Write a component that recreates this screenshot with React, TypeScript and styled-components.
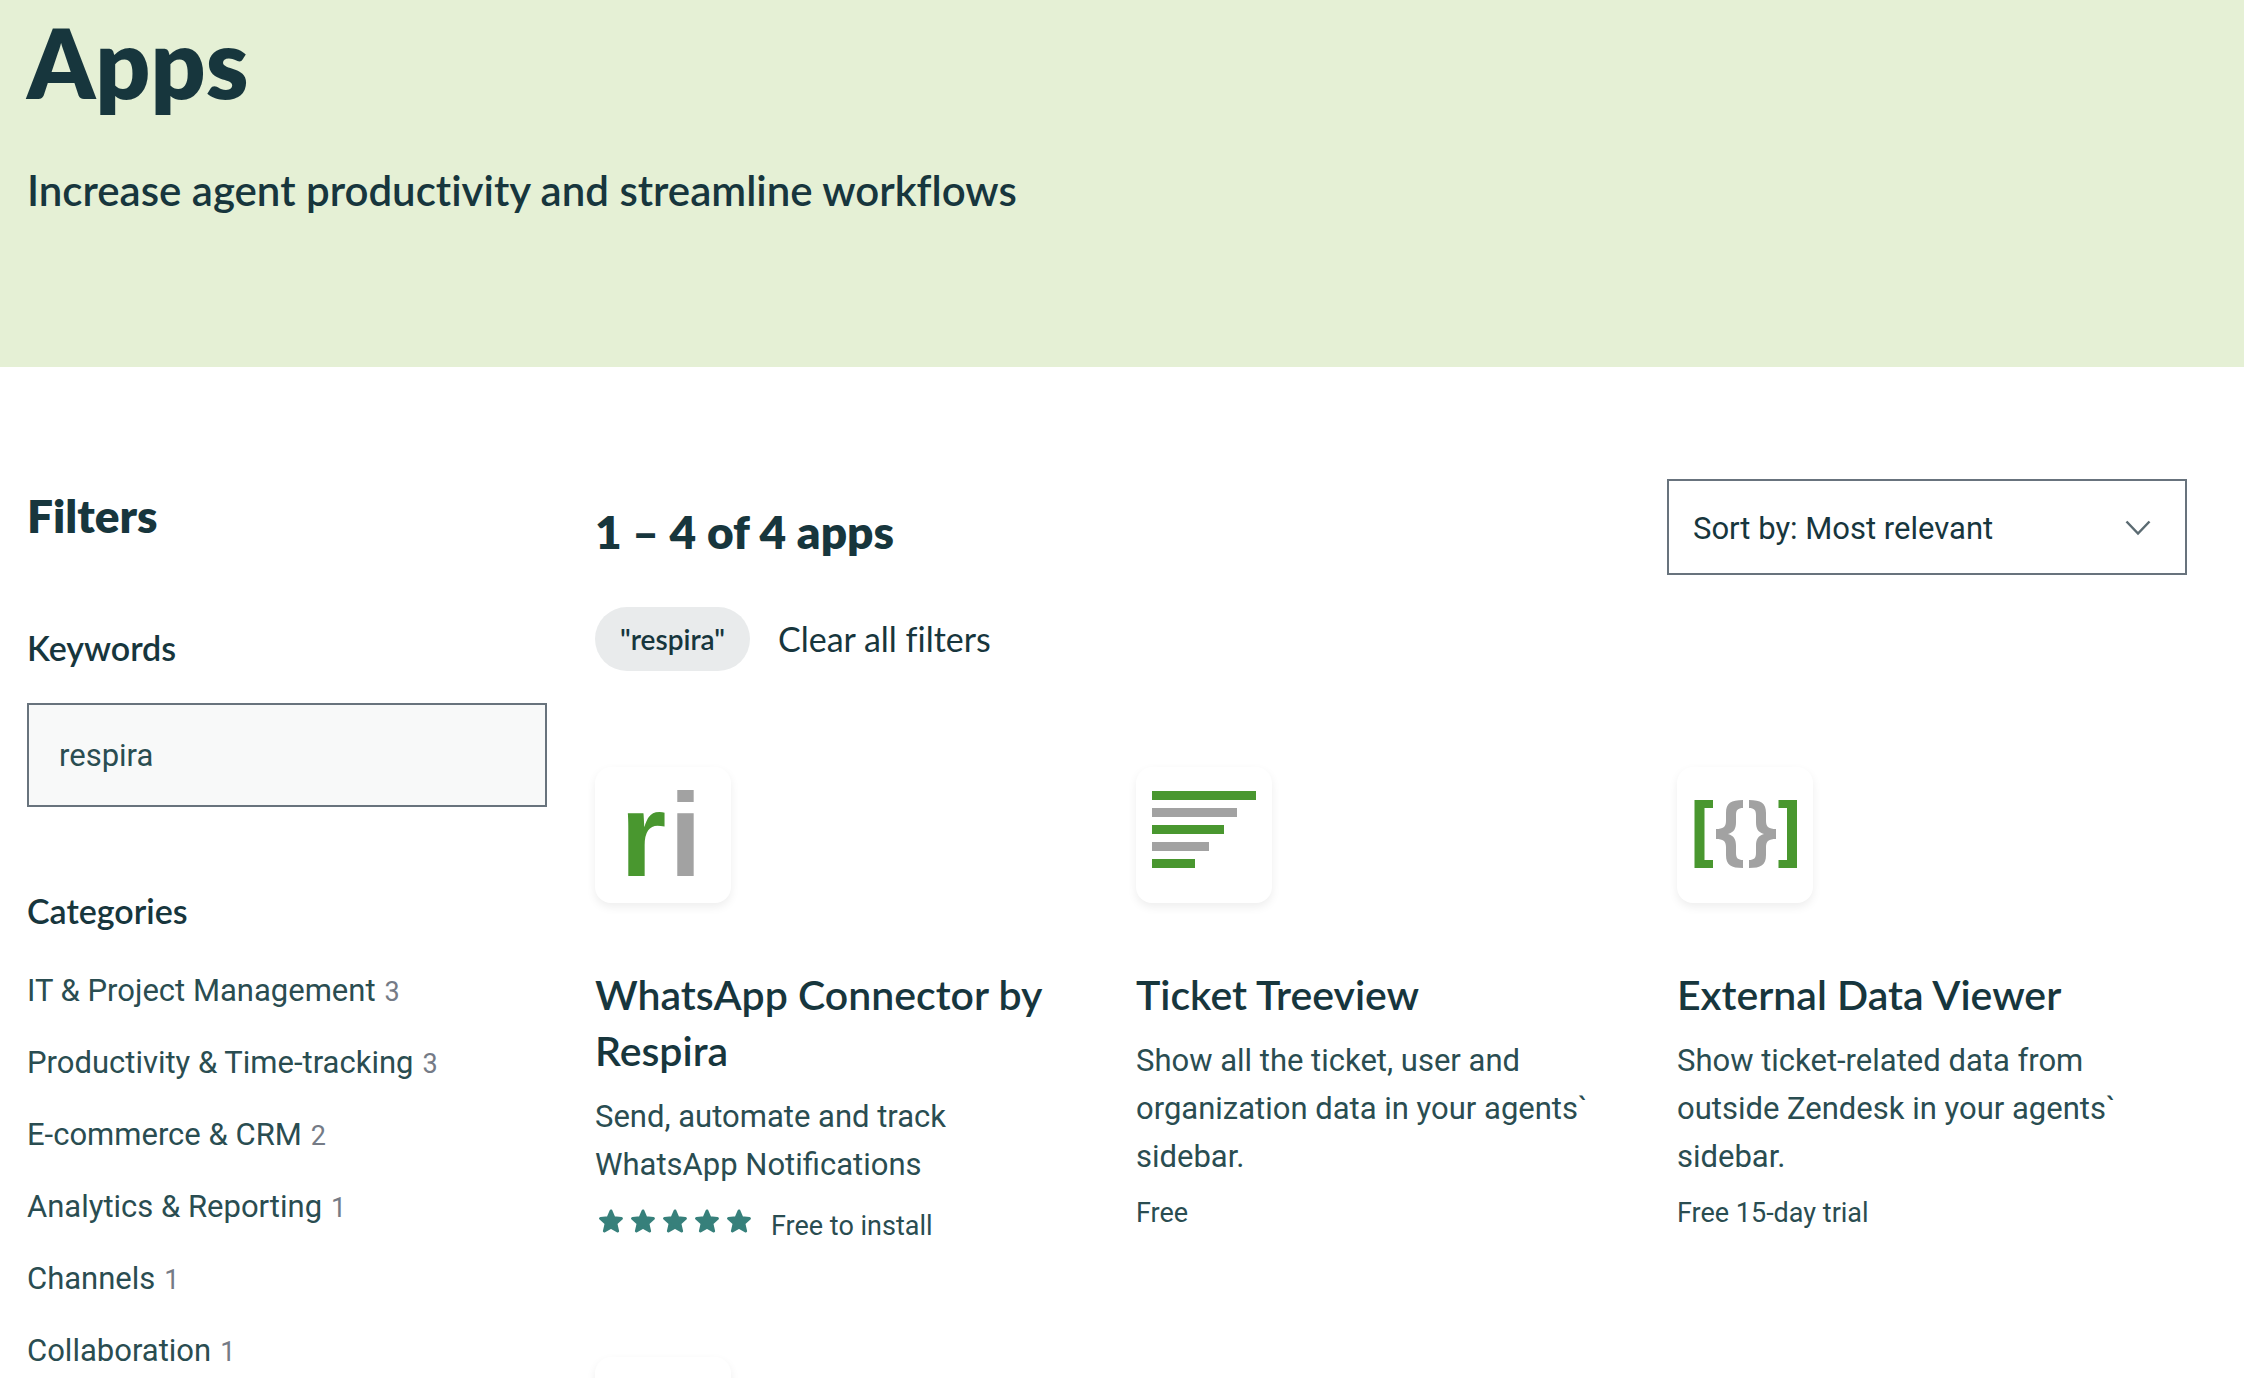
import React, { useState } from "react";
import styled, { createGlobalStyle, css } from "styled-components";

const color = {
  ink: "#17363d",
  text: "#2a4d51",
  muted: "#757b86",
  border: "#68737d",
  hero: "#e5f0d5",
  field: "#f8f9f9",
  pill: "#e9ebec",
  star: "#37807b",
  green: "#49972f",
  grey: "#a2a2a2",
};

const display = `Lato, "Open Sans", sans-serif`;
const body = `Roboto, "Liberation Sans", sans-serif`;

const GlobalStyle = createGlobalStyle`
  * { box-sizing: border-box; }
  body { margin: 0; background: #fff; font-family: ${body}; color: ${color.text}; }
  h1, h2, h3, p, ul { margin: 0; padding: 0; }
  a { color: inherit; text-decoration: none; }
`;

const displayText = css`
  font-family: ${display};
  font-variant-ligatures: none;
  color: ${color.ink};
`;

const Page = styled.div`
  height: 100vh;
  overflow: hidden;
`;

const Hero = styled.header`
  padding: 0 27px 149px;
  background: ${color.hero};
`;

const HeroTitle = styled.h1`
  ${displayText}
  font-size: 96px;
  font-weight: 800;
  line-height: 124px;
`;

const HeroText = styled.p`
  ${displayText}
  margin-top: 38px;
  font-size: 42px;
  font-weight: 600;
  line-height: 56px;
`;

const Content = styled.div`
  display: grid;
  grid-template-columns: 520px minmax(0, 1fr);
  column-gap: 48px;
  padding: 0 57px 0 27px;
`;

const Sidebar = styled.aside`
  padding-top: 121px;
`;

const Heading = styled.h2`
  ${displayText}
  font-size: 46px;
  font-weight: 800;
  line-height: 56px;
`;

const groupLabel = css`
  ${displayText}
  display: block;
  margin-top: 84px;
  font-size: 34px;
  font-weight: 600;
  line-height: 40px;
`;

const FieldLabel = styled.label`
  ${groupLabel}
`;

const GroupTitle = styled.h3`
  ${groupLabel}
`;

const KeywordInput = styled.input`
  display: block;
  width: 100%;
  height: 104px;
  margin-top: 35px;
  padding: 0 30px;
  border: 2px solid ${color.border};
  border-radius: 0;
  background: ${color.field};
  color: ${color.text};
  font: 400 31px ${body};
`;

const CategoryList = styled.ul`
  display: flex;
  flex-direction: column;
  gap: 24px;
  margin-top: 36px;
  list-style: none;
`;

const CategoryItem = styled.li`
  height: 48px;
  font-size: 31px;
  line-height: 48px;
`;

const Count = styled.span`
  margin-left: 9px;
  color: ${color.muted};
  font-size: 27px;
`;

const Main = styled.main`
  padding-top: 112px;
`;

const ResultsBar = styled.div`
  display: flex;
  align-items: flex-start;
  justify-content: space-between;
`;

const ResultsHeading = styled(Heading)`
  padding-top: 25px;
`;

const SortBox = styled.div`
  display: grid;
  width: 520px;
  height: 96px;
  align-items: center;

  & > * { grid-area: 1 / 1; }
`;

const SortSelect = styled.select`
  appearance: none;
  width: 100%;
  height: 100%;
  padding: 2px 64px 0 24px;
  border: 2px solid ${color.border};
  border-radius: 0;
  background: #fff;
  color: ${color.ink};
  font: 400 31px ${body};
`;

const Chevron = styled.svg`
  justify-self: end;
  margin-right: 36px;
  padding-top: 2px;
  pointer-events: none;
`;

const ActiveFilters = styled.div`
  display: flex;
  align-items: center;
  gap: 28px;
  margin-top: 32px;
`;

const Pill = styled.button`
  ${displayText}
  height: 64px;
  padding: 0 25px;
  border: 0;
  border-radius: 32px;
  background: ${color.pill};
  font-size: 28px;
  font-weight: 600;
`;

const ClearLink = styled.a`
  && { color: ${color.ink}; }
  ${displayText}
  font-size: 34px;
  line-height: 42px;
`;

const AppGrid = styled.div`
  display: grid;
  grid-template-columns: repeat(3, minmax(0, 1fr));
  gap: 106px 31px;
  margin-top: 96px;
`;

const Card = styled.article`
  padding-right: 24px;
`;

const Tile = styled.div`
  width: 136px;
  height: 136px;
  border-radius: 16px;
  background: #fff;
  box-shadow: 0 4px 10px rgba(0, 0, 0, 0.07);

  svg { display: block; }
`;

const CardTitle = styled.h3`
  ${displayText}
  margin-top: 64px;
  font-size: 41px;
  font-weight: 600;
  line-height: 56px;
`;

const CardText = styled.p`
  margin-top: 14px;
  font-size: 31px;
  line-height: 48px;
`;

const Meta = styled.div<{ $rated: boolean }>`
  display: flex;
  align-items: center;
  gap: 16px;
  height: ${p => (p.$rated ? "50px" : "40px")};
  margin-top: 12px;
  font-size: 27px;
  line-height: 40px;
`;

const Stars = styled.div`
  display: flex;
  padding-bottom: 10px;
`;

const Star = () => (
  <svg width="32" height="24" viewBox="0 0 32 24" aria-hidden="true">
    <path
      d="M16 2l2.900 6.800 7.500.7-5.500 5 1.700 7.500-6.600-3.900L9.400 22l1.700-7.500-5.500-5 7.500-.7z"
      fill={color.star}
      stroke={color.star}
      strokeWidth="3"
      strokeLinejoin="round"
    />
  </svg>
);

const ConnectorLogo = () => (
  <svg width="136" height="136" viewBox="0 0 136 136" fontFamily="Liberation Sans, sans-serif" fontWeight="700" fontSize="119">
    <text x="25" y="109" fill={color.green}>r</text>
    <text x="74" y="109" fill={color.grey}>i</text>
  </svg>
);

const treeBars = [104, 85, 72, 57, 43];

const TreeviewLogo = () => (
  <svg width="136" height="136" viewBox="0 0 136 136">
    {treeBars.map((width, i) => (
      <rect key={width} x="16" y={24 + i * 17} width={width} height="9" fill={i % 2 ? color.grey : color.green} />
    ))}
  </svg>
);

const bracePath =
  "M66 33C54 33 49 36 49 46V54C49 60 46 62 39 62V72C46 72 49 74 49 80V88C49 98 54 101 66 101V93C61 93 59 91 59 86V79C59 72 57 69 51 67C57 65 59 62 59 55V48C59 43 61 41 66 41Z";

const ViewerLogo = () => (
  <svg width="136" height="136" viewBox="0 0 136 136">
    <path d="M17.500 33H36v8H27.500v52H36v8H17.500zM120 33h-18.500v8H110v52h-8.500v8H120z" fill={color.green} />
    <path d={bracePath} fill={color.grey} />
    <path d={bracePath} fill={color.grey} transform="matrix(-1 0 0 1 138 0)" />
  </svg>
);

const categories = [
  { name: "IT & Project Management", count: 3 },
  { name: "Productivity & Time-tracking", count: 3 },
  { name: "E-commerce & CRM", count: 2 },
  { name: "Analytics & Reporting", count: 1 },
  { name: "Channels", count: 1 },
  { name: "Collaboration", count: 1 },
];

const apps = [
  {
    name: "WhatsApp Connector by Respira",
    text: "Send, automate and track WhatsApp Notifications",
    price: "Free to install",
    rating: 5,
    Logo: ConnectorLogo,
  },
  {
    name: "Ticket Treeview",
    text: "Show all the ticket, user and organization data in your agents` sidebar.",
    price: "Free",
    rating: 0,
    Logo: TreeviewLogo,
  },
  {
    name: "External Data Viewer",
    text: "Show ticket-related data from outside Zendesk in your agents` sidebar.",
    price: "Free 15-day trial",
    rating: 0,
    Logo: ViewerLogo,
  },
];

export default function App() {
  const [keyword, setKeyword] = useState("respira");

  return (
    <Page>
      <GlobalStyle />
      <Hero>
        <HeroTitle>Apps</HeroTitle>
        <HeroText>Increase agent productivity and streamline workflows</HeroText>
      </Hero>
      <Content>
        <Sidebar>
          <Heading>Filters</Heading>
          <FieldLabel htmlFor="keywords">Keywords</FieldLabel>
          <KeywordInput id="keywords" type="text" value={keyword} onChange={e => setKeyword(e.target.value)} />
          <GroupTitle>Categories</GroupTitle>
          <CategoryList>
            {categories.map(({ name, count }) => (
              <CategoryItem key={name}>
                <a href="#category">{name}</a>
                <Count>{count}</Count>
              </CategoryItem>
            ))}
          </CategoryList>
        </Sidebar>
        <Main>
          <ResultsBar>
            <ResultsHeading>1 – 4 of 4 apps</ResultsHeading>
            <SortBox>
              <SortSelect aria-label="Sort by" defaultValue="relevant">
                <option value="relevant">Sort by: Most relevant</option>
              </SortSelect>
              <Chevron width="26" height="18" viewBox="0 0 26 16" fill="none" stroke="#5b6b72" strokeWidth="2.500" aria-hidden="true">
                <path d="M1.500 1.500L13 13.500 24.500 1.500" />
              </Chevron>
            </SortBox>
          </ResultsBar>
          <ActiveFilters>
            <Pill type="button">"respira"</Pill>
            <ClearLink href="#clear">Clear all filters</ClearLink>
          </ActiveFilters>
          <AppGrid>
            {apps.map(({ name, text, price, rating, Logo }) => (
              <Card key={name}>
                <Tile>
                  <Logo />
                </Tile>
                <CardTitle>
                  <a href="#app">{name}</a>
                </CardTitle>
                <CardText>{text}</CardText>
                <Meta $rated={rating > 0}>
                  {rating > 0 && (
                    <Stars role="img" aria-label={`${rating} out of 5 stars`}>
                      {Array.from({ length: rating }, (_, i) => (
                        <Star key={i} />
                      ))}
                    </Stars>
                  )}
                  <span>{price}</span>
                </Meta>
              </Card>
            ))}
            <Card>
              <Tile />
            </Card>
          </AppGrid>
        </Main>
      </Content>
    </Page>
  );
}
